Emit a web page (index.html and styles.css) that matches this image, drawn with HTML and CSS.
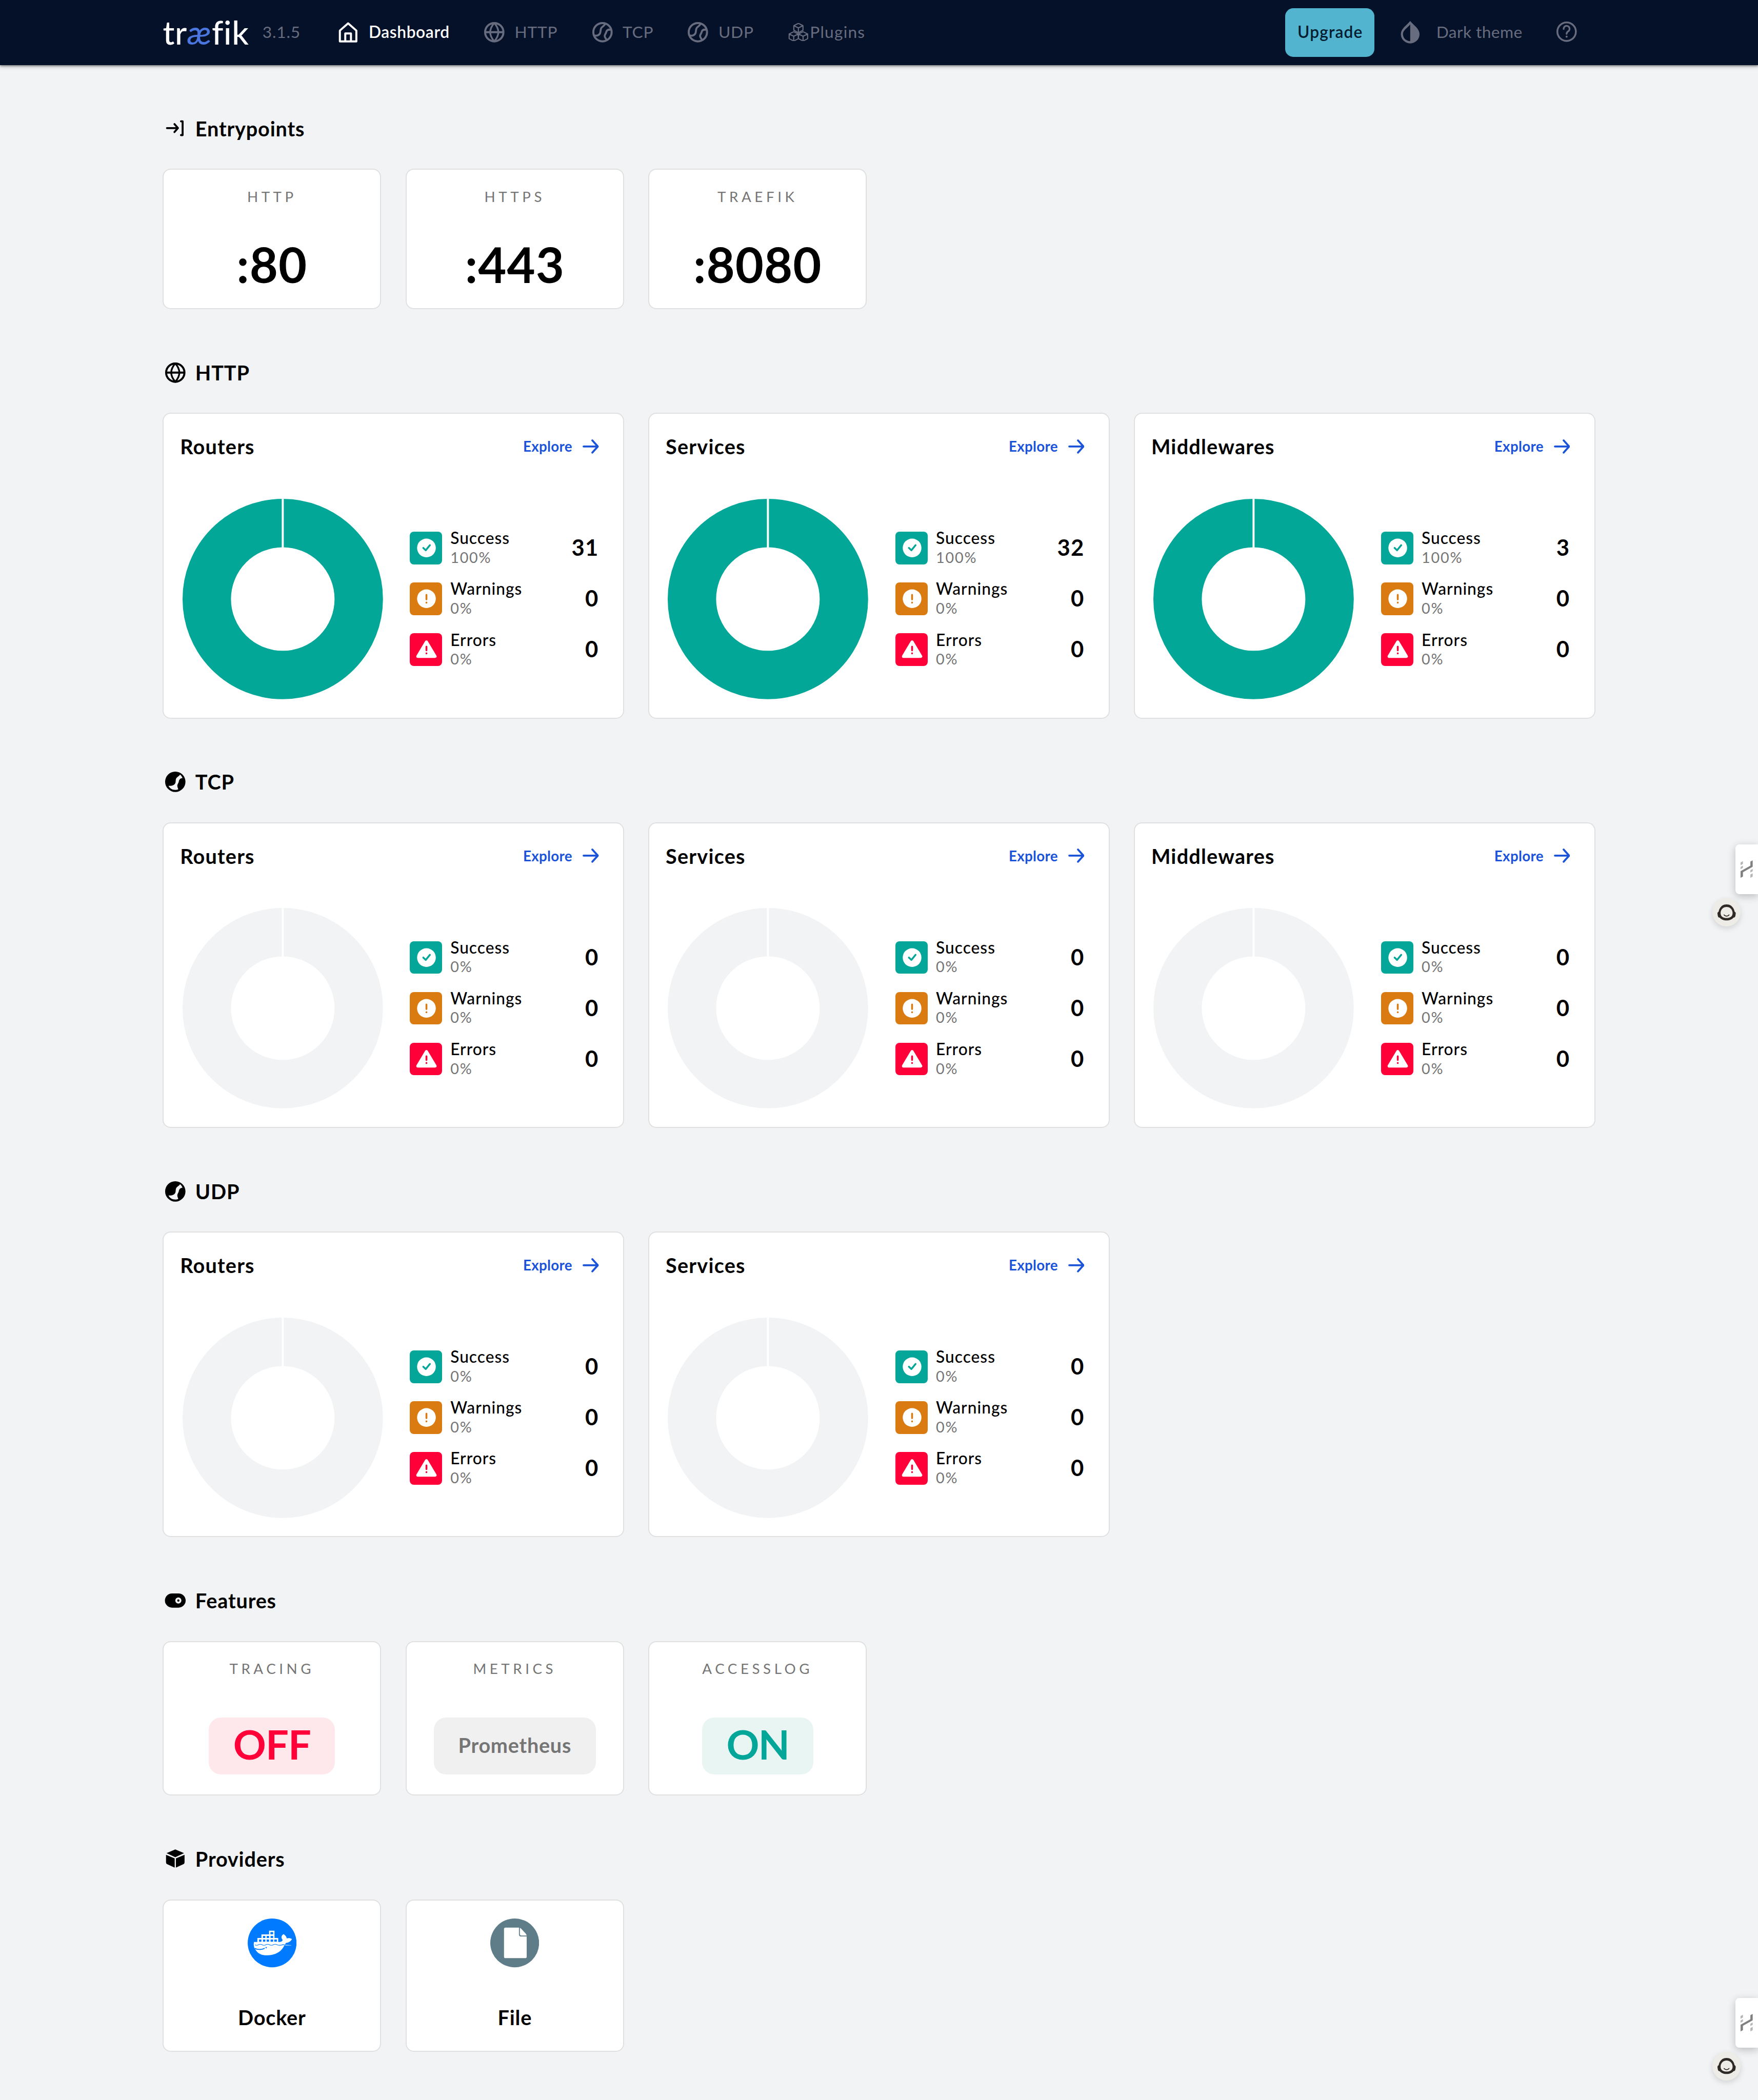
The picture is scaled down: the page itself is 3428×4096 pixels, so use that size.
FILE: index.html
```html
<!DOCTYPE html>
<html lang="en">
<head>
<meta charset="utf-8">
<title>Traefik</title>
<link rel="stylesheet" href="styles.css">
</head>
<body>
<svg class="sprite" aria-hidden="true">
  <symbol id="globe" viewBox="0 0 24 24"><g fill="none" stroke="currentColor" stroke-width="2"><circle cx="12" cy="12" r="9"/><path d="M3 12H21"/><path d="M12 3Q4 12 12 21Q20 12 12 3Z" stroke-linejoin="round" stroke-width="1.7"/></g></symbol>
  <symbol id="world" viewBox="0 0 24 24"><g fill="none" stroke="currentColor" stroke-width="1.9"><circle cx="12" cy="12" r="9" stroke-width="2"/><path d="M3.8 15.2C7 15.9 9.4 14.6 9.9 12.2C10.4 9.8 9.8 8.4 11.6 7C13.2 5.8 14.2 5.2 14.6 3.6"/><path d="M20.6 9.6C18.2 9.2 16.2 9.8 15.8 11.6C15.4 13.4 14.2 14 14.2 15.8C14.3 17.8 15.6 18 16.2 20"/></g></symbol>
  <symbol id="world-solid" viewBox="0 0 24 24"><path fill="currentColor" fill-rule="evenodd" d="M12 2A10 10 0 1 1 12 22A10 10 0 1 1 12 2ZM16.6 4.9C16 6 15.5 6.3 14 7.4C12 9 12.7 10.6 12.2 12.8C11.5 15.2 9 16.2 5.3 16C6.7 18.8 9.2 20 12 20C13 20 14 19.8 14.8 19.5C15 18.6 14 17.7 14 16C14 14.2 15.2 13.6 15.5 11.6C15.8 9.6 17 8.7 19.1 8.3C18.6 6.9 17.7 5.7 16.6 4.9Z"/></symbol>
  <symbol id="cube" viewBox="-5 -5 10 10" overflow="visible"><path fill="none" stroke="currentColor" stroke-width="1.1" stroke-linejoin="round" d="M0-4.5L4.5-2.3V2.3L0 4.7L-4.5 2.3V-2.3ZM-4.5-2.3L0 0L4.5-2.3M0 0V4.7"/></symbol>
  <symbol id="arrow" viewBox="0 0 16 16"><path fill="none" stroke="currentColor" stroke-width="1.9" stroke-linecap="round" stroke-linejoin="round" d="M1 8H15M9.6 2L15 8L9.6 14"/></symbol>
  <symbol id="ok" viewBox="0 0 32 32"><circle cx="16.4" cy="16" r="9.2" fill="#fff"/><path fill="none" stroke="#03a698" stroke-width="1.8" stroke-linecap="round" stroke-linejoin="round" d="M13.3 16L15.7 18.3L19.8 13.3"/></symbol>
  <symbol id="warn" viewBox="0 0 32 32"><circle cx="16.4" cy="16" r="9.2" fill="#fff"/><path fill="none" stroke="#d97b11" stroke-width="1.8" stroke-linecap="round" d="M16.4 12.3V16.7M16.4 19.8V19.9"/></symbol>
  <symbol id="err" viewBox="0 0 32 32"><path fill="#fff" stroke="#fff" stroke-width="3" stroke-linejoin="round" d="M16.4 8.6L24.9 22.8H7.9Z"/><path fill="none" stroke="#ff0039" stroke-width="1.8" stroke-linecap="round" d="M16.4 13.2V16.9M16.4 19.8V19.9"/></symbol>
  <symbol id="donut" viewBox="0 0 200 200"><circle cx="100" cy="100" r="74.7" fill="none" stroke="currentColor" stroke-width="47.6"/><path d="M100 0V52" stroke="#fff" stroke-width="2"/></symbol>
  <symbol id="tab-mark" viewBox="0 0 24 35"><path fill="#808080" d="M0 34.5V21.5L19.3 10.5V2.5L24 0V12.5L4.7 23.5V32Z"/><path fill="#b5b5b5" d="M0 4.3L4.7 1.8V7L0 9.5ZM0 13L4.7 10.5V15L0 17.5ZM19.3 19.5L24 17V21.5L19.3 24ZM19.3 28L24 25.5V32L19.3 34.5Z"/></symbol>
  <symbol id="face" viewBox="0 0 28 28"><path fill="#2f2a26" fill-rule="evenodd" d="M14 6C17.5 6 19 7.6 20.4 9.5C21.4 11 21.6 12.3 21.9 13.2C23 13.6 23.2 14.8 22.8 16.2C22.7 18 22.2 19 20.8 19C19.5 20.8 17 21.8 14 21.8C11 21.8 8.5 20.8 7.2 19C5.8 19 5.4 18 5.2 16.2C4.8 14.8 5 13.6 6.2 13.2C6.4 12.3 6.6 11 7.6 9.5C9 7.6 10.5 6 14 6ZM14 8.6C10.5 8.6 8.1 11.3 8.1 14.6C8.1 18 10.6 19.4 14 19.4C17.4 19.4 19.9 18 19.9 14.6C19.9 11.3 17.5 8.6 14 8.6Z"/><path fill="none" stroke="#2f2a26" stroke-width=".9" stroke-linecap="round" d="M11.5 16.4C12.8 18 15.2 18 16.4 16.4"/></symbol>
</svg>

<header class="topbar">
  <div class="container topbar-row">
    <div class="logo">tr<span class="logo-ae">æ</span>fik</div>
    <span class="version">3.1.5</span>
    <nav class="nav">
      <a class="nav-item nav-home active"><svg class="i24" viewBox="0 0 24 24"><path fill="none" stroke="currentColor" stroke-width="2" stroke-linejoin="round" d="M3.9 21V10.4L12 3.3L20.1 10.4V21ZM9.2 21V13.2H14.8V21"/></svg>Dashboard</a>
      <a class="nav-item nav-http"><svg class="i24"><use href="#globe"/></svg>HTTP</a>
      <a class="nav-item nav-tcp"><svg class="i24"><use href="#world"/></svg>TCP</a>
      <a class="nav-item nav-udp"><svg class="i24"><use href="#world"/></svg>UDP</a>
      <a class="nav-item nav-plugins"><svg class="i-plug" viewBox="0 0 20 18"><use href="#cube" x="5" y="-.2" width="10" height="10"/><use href="#cube" x=".4" y="8" width="10" height="10"/><use href="#cube" x="9.6" y="8" width="10" height="10"/></svg>Plugins</a>
    </nav>
    <a class="upgrade">Upgrade</a>
    <a class="theme"><svg class="i24" viewBox="0 0 24 24"><path fill="currentColor" fill-rule="evenodd" d="M12 1C8.6 5.2 2.8 8.4 2.8 13.9A9.2 9.1 0 0 0 21.2 13.9C21.2 8.4 15.4 5.2 12 1ZM12 4.4V20.8C8 20.8 4.9 17.7 4.9 13.9C4.9 10 9.2 7.8 12 4.4Z"/></svg>Dark theme</a>
    <svg class="i24 help" viewBox="0 0 24 24"><circle cx="12" cy="12" r="9.1" fill="none" stroke="currentColor" stroke-width="1.8"/><path fill="none" stroke="currentColor" stroke-width="1.7" stroke-linecap="round" d="M9.1 9.3A2.9 2.9 0 1 1 13.7 11.5C12.6 12.3 12 12.7 12 14.1"/><circle cx="12" cy="16.9" r="1" fill="currentColor"/></svg>
  </div>
</header>

<main class="container">
  <section>
    <h2><svg class="i24" viewBox="0 0 24 24"><path fill="none" stroke="currentColor" stroke-width="1.9" stroke-linecap="round" stroke-linejoin="round" d="M3.8 11.5H14.4M11.2 7.6L14.6 11.5L11.2 15.4M17.6 4.8H19.2V18.4H17.6"/></svg>Entrypoints</h2>
    <div class="grid small">
      <div class="card entry"><span class="label">HTTP</span><b class="port">:80</b></div>
      <div class="card entry"><span class="label">HTTPS</span><b class="port">:443</b></div>
      <div class="card entry"><span class="label">TRAEFIK</span><b class="port">:8080</b></div>
    </div>
  </section>

  <section>
    <h2><svg class="i24"><use href="#globe"/></svg>HTTP</h2>
    <div class="grid wide">
      <article class="card stat">
        <div class="stat-head"><h3>Routers</h3><a class="explore">Explore<svg><use href="#arrow"/></svg></a></div>
        <div class="stat-body"><svg class="donut full"><use href="#donut"/></svg>
          <ul class="legend">
            <li><svg class="tag ok"><use href="#ok"/></svg><span class="name">Success<small>100%</small></span><b>31</b></li>
            <li><svg class="tag warn"><use href="#warn"/></svg><span class="name">Warnings<small>0%</small></span><b>0</b></li>
            <li><svg class="tag err"><use href="#err"/></svg><span class="name">Errors<small>0%</small></span><b>0</b></li>
          </ul></div>
      </article>
      <article class="card stat">
        <div class="stat-head"><h3>Services</h3><a class="explore">Explore<svg><use href="#arrow"/></svg></a></div>
        <div class="stat-body"><svg class="donut full"><use href="#donut"/></svg>
          <ul class="legend">
            <li><svg class="tag ok"><use href="#ok"/></svg><span class="name">Success<small>100%</small></span><b>32</b></li>
            <li><svg class="tag warn"><use href="#warn"/></svg><span class="name">Warnings<small>0%</small></span><b>0</b></li>
            <li><svg class="tag err"><use href="#err"/></svg><span class="name">Errors<small>0%</small></span><b>0</b></li>
          </ul></div>
      </article>
      <article class="card stat">
        <div class="stat-head"><h3>Middlewares</h3><a class="explore">Explore<svg><use href="#arrow"/></svg></a></div>
        <div class="stat-body"><svg class="donut full"><use href="#donut"/></svg>
          <ul class="legend">
            <li><svg class="tag ok"><use href="#ok"/></svg><span class="name">Success<small>100%</small></span><b>3</b></li>
            <li><svg class="tag warn"><use href="#warn"/></svg><span class="name">Warnings<small>0%</small></span><b>0</b></li>
            <li><svg class="tag err"><use href="#err"/></svg><span class="name">Errors<small>0%</small></span><b>0</b></li>
          </ul></div>
      </article>
    </div>
  </section>

  <section>
    <h2><svg class="i24"><use href="#world-solid"/></svg>TCP</h2>
    <div class="grid wide">
      <article class="card stat">
        <div class="stat-head"><h3>Routers</h3><a class="explore">Explore<svg><use href="#arrow"/></svg></a></div>
        <div class="stat-body"><svg class="donut"><use href="#donut"/></svg>
          <ul class="legend">
            <li><svg class="tag ok"><use href="#ok"/></svg><span class="name">Success<small>0%</small></span><b>0</b></li>
            <li><svg class="tag warn"><use href="#warn"/></svg><span class="name">Warnings<small>0%</small></span><b>0</b></li>
            <li><svg class="tag err"><use href="#err"/></svg><span class="name">Errors<small>0%</small></span><b>0</b></li>
          </ul></div>
      </article>
      <article class="card stat">
        <div class="stat-head"><h3>Services</h3><a class="explore">Explore<svg><use href="#arrow"/></svg></a></div>
        <div class="stat-body"><svg class="donut"><use href="#donut"/></svg>
          <ul class="legend">
            <li><svg class="tag ok"><use href="#ok"/></svg><span class="name">Success<small>0%</small></span><b>0</b></li>
            <li><svg class="tag warn"><use href="#warn"/></svg><span class="name">Warnings<small>0%</small></span><b>0</b></li>
            <li><svg class="tag err"><use href="#err"/></svg><span class="name">Errors<small>0%</small></span><b>0</b></li>
          </ul></div>
      </article>
      <article class="card stat">
        <div class="stat-head"><h3>Middlewares</h3><a class="explore">Explore<svg><use href="#arrow"/></svg></a></div>
        <div class="stat-body"><svg class="donut"><use href="#donut"/></svg>
          <ul class="legend">
            <li><svg class="tag ok"><use href="#ok"/></svg><span class="name">Success<small>0%</small></span><b>0</b></li>
            <li><svg class="tag warn"><use href="#warn"/></svg><span class="name">Warnings<small>0%</small></span><b>0</b></li>
            <li><svg class="tag err"><use href="#err"/></svg><span class="name">Errors<small>0%</small></span><b>0</b></li>
          </ul></div>
      </article>
    </div>
  </section>

  <section>
    <h2><svg class="i24"><use href="#world-solid"/></svg>UDP</h2>
    <div class="grid wide">
      <article class="card stat">
        <div class="stat-head"><h3>Routers</h3><a class="explore">Explore<svg><use href="#arrow"/></svg></a></div>
        <div class="stat-body"><svg class="donut"><use href="#donut"/></svg>
          <ul class="legend">
            <li><svg class="tag ok"><use href="#ok"/></svg><span class="name">Success<small>0%</small></span><b>0</b></li>
            <li><svg class="tag warn"><use href="#warn"/></svg><span class="name">Warnings<small>0%</small></span><b>0</b></li>
            <li><svg class="tag err"><use href="#err"/></svg><span class="name">Errors<small>0%</small></span><b>0</b></li>
          </ul></div>
      </article>
      <article class="card stat">
        <div class="stat-head"><h3>Services</h3><a class="explore">Explore<svg><use href="#arrow"/></svg></a></div>
        <div class="stat-body"><svg class="donut"><use href="#donut"/></svg>
          <ul class="legend">
            <li><svg class="tag ok"><use href="#ok"/></svg><span class="name">Success<small>0%</small></span><b>0</b></li>
            <li><svg class="tag warn"><use href="#warn"/></svg><span class="name">Warnings<small>0%</small></span><b>0</b></li>
            <li><svg class="tag err"><use href="#err"/></svg><span class="name">Errors<small>0%</small></span><b>0</b></li>
          </ul></div>
      </article>
    </div>
  </section>

  <section>
    <h2><svg class="i24" viewBox="0 0 24 24"><path fill="currentColor" fill-rule="evenodd" d="M8.8 5H15.2A7 7 0 0 1 15.2 19H8.8A7 7 0 0 1 8.8 5ZM15 9A3 3 0 0 0 15 15A3 3 0 0 0 15 9Z"/><circle cx="15" cy="12" r="1.1" fill="currentColor"/></svg>Features</h2>
    <div class="grid small">
      <div class="card feature"><span class="label">TRACING</span><b class="badge off">OFF</b></div>
      <div class="card feature"><span class="label">METRICS</span><b class="badge vendor">Prometheus</b></div>
      <div class="card feature"><span class="label">ACCESSLOG</span><b class="badge on">ON</b></div>
    </div>
  </section>

  <section>
    <h2><svg class="i24" viewBox="0 0 24 24"><path fill="currentColor" d="M12 2.6L20.6 6.3L12 10.3L3.4 6.3ZM2.9 8L11.4 11.5V20.6L4 17.2Q2.9 16.6 2.9 15.4ZM21.1 8L12.6 11.5V20.6L20 17.2Q21.1 16.6 21.1 15.4Z"/></svg>Providers</h2>
    <div class="grid small">
      <div class="card provider">
        <svg class="logo48" viewBox="51 39 288 288"><circle cx="195" cy="183" r="144" fill="#007bff"/>
          <path fill="#fff" d="M177 111H209V154H231V177H242C254 174 258 170 256 164C247 152 248 140 263 131C274 138 281 148 281 156C291 153 303 154 312 160C306 172 296 181 277 183C274 187 273 190 271 194L308 196V198H267C252 232 218 256 165 256C132 256 112 246 101 229C88 215 84 196 88 177H108V154H132V133H177Z"/>
          <path fill="#007bff" d="M185 119h16v13h-16zM141 142h14v12h-14zM163 142h14v12h-14zM186 142h15v12h-15zM118 163h14v13h-14zM141 163h14v13h-14zM163 163h14v13h-14zM186 163h15v13h-15zM208 163h15v13h-15z"/>
          <path fill="none" stroke="#007bff" stroke-width="3.5" d="M94 194Q104 200 114 194Q125 188 136 194Q147 200 158 194Q169 188 180 194Q191 200 202 194Q213 188 224 194Q240 200 260 193L274 196"/>
          <path fill="none" stroke="#007bff" stroke-width="6" d="M92 216C112 224 136 222 151 215"/><circle cx="160" cy="211" r="4" fill="#007bff"/></svg>
        <b>Docker</b></div>
      <div class="card provider">
        <svg class="logo48" viewBox="0 0 48 48"><circle cx="24" cy="24" r="24" fill="#5e7d88"/><path fill="#fff" d="M15 9H28.2V15.6Q28.2 17.7 30.3 17.7H35.8V37.5Q35.8 39 34.3 39H15Q13.5 39 13.5 37.5V10.5Q13.5 9 15 9ZM29.1 9.2Q29.9 9.5 30.3 10L35 15Q35.6 15.8 35.8 16.7H30.6Q29.1 16.7 29.1 15.2Z"/></svg>
        <b>File</b></div>
    </div>
  </section>
</main>

<div class="side-tab first"><svg><use href="#tab-mark"/></svg></div>
<div class="bubble first"><svg><use href="#face"/></svg></div>
<div class="side-tab second"><svg><use href="#tab-mark"/></svg></div>
<div class="bubble second"><svg><use href="#face"/></svg></div>
</body>
</html>
```
FILE: styles.css
```css
* { box-sizing: border-box; margin: 0; padding: 0; }

html { background: #f1f3f5; overflow: hidden; }

body {
  position: relative;
  zoom: 1.98379;
  width: 1728px;
  height: 2064.7px;
  overflow: hidden;
  background: #f1f3f5;
  color: #000;
  font: 400 16px/24px Lato, "Open Sans", sans-serif;
}

svg { display: block; flex: none; }
.sprite { position: absolute; width: 0; height: 0; }
.i24 { width: 24px; height: 24px; }

.container { width: 1408px; margin: 0 auto; }

/* Top bar */
.topbar {
  position: relative;
  height: 64px;
  background: #041129;
  color: #686c7f;
  box-shadow: 0 1px 2px rgba(0, 0, 0, .4), 0 1px 5px rgba(0, 0, 0, .2);
}
.topbar-row { display: flex; align-items: center; height: 63px; }
.logo {
  width: 98px;
  color: #fff;
  font-size: 32px;
  font-weight: 500;
  line-height: 40px;
  letter-spacing: .35px;
  font-variant-ligatures: none;
  white-space: nowrap;
}
.logo-ae { color: #4b76e0; font-style: italic; }
.version { width: 72.4px; letter-spacing: .4px; }
.nav { display: flex; width: 932.6px; }
.nav-item { display: flex; align-items: center; gap: 8px; letter-spacing: .4px; white-space: nowrap; }
.nav-item.active { color: #fff; font-weight: 600; letter-spacing: .3px; }
.nav-home { width: 143.4px; }
.nav-http { width: 106.2px; }
.nav-tcp { width: 94.2px; }
.nav-udp { width: 100.4px; }
.nav-plugins { gap: 1.5px; letter-spacing: .6px; }
.i-plug { width: 20px; height: 18px; }
.upgrade {
  width: 88px;
  height: 48px;
  margin-top: 1px;
  padding-left: 1px;
  border-radius: 8px;
  background: #52b4cf;
  color: #041c30;
  font-weight: 600;
  line-height: 47px;
  letter-spacing: .55px;
  text-align: center;
}
.theme { display: flex; gap: 13.6px; margin-left: 23.2px; width: 153.8px; letter-spacing: .2px; white-space: nowrap; }
.help { margin-top: -1px; }

/* Sections */
h2 {
  display: flex;
  align-items: center;
  gap: 7.6px;
  height: 102px;
  padding: 22.6px 0 0 .4px;
  font-size: 20px;
  font-weight: 700;
  line-height: 28px;
  letter-spacing: .4px;
}
.grid { display: grid; gap: 24px; }
.grid.small { grid-template-columns: repeat(6, 1fr); }
.grid.wide { grid-template-columns: repeat(3, 1fr); }
.card { border: 1.01px solid #e0e0e0; border-radius: 8px; background: #fff; }

.entry, .feature, .provider { display: flex; flex-direction: column; align-items: center; }
.entry { height: 138px; padding-top: 16.5px; }
.label { color: #757575; font-size: 14px; line-height: 20px; letter-spacing: 3.3px; }
.port { margin-top: 27.5px; font-size: 48px; line-height: 58px; letter-spacing: .5px; }

.feature { height: 152px; padding-top: 16px; }
.badge {
  height: 56px;
  margin-top: 38px;
  padding: 0 24px;
  border-radius: 12px;
  font-size: 40px;
  line-height: 52px;
  letter-spacing: -.5px;
}
.off { background: #ffe8eb; color: #ff0039; }
.on { background: #e9f5f3; color: #03a698; letter-spacing: -1px; }
.vendor { background: #f0f0f0; color: #757575; font-size: 20px; line-height: 54px; letter-spacing: .35px; }

.provider { height: 150px; padding-top: 18px; font-size: 20px; letter-spacing: .4px; }
.logo48 { width: 48px; height: 48px; margin-bottom: 37px; }

/* Status cards */
.stat { height: 300.5px; padding: 15px 23.8px 0 16px; }
.stat-head { display: flex; align-items: center; justify-content: space-between; height: 34px; }
h3 { font-size: 20px; font-weight: 700; line-height: 24px; letter-spacing: .6px; }
.explore { display: flex; align-items: center; gap: 10px; color: #1b54d9; font-size: 14px; font-weight: 700; letter-spacing: .15px; }
.explore svg { width: 16px; height: 16px; }
.stat-body { display: flex; align-items: center; margin-top: 32.8px; }
.donut { width: 200px; height: 200px; margin-left: .7px; color: #f1f3f5; }
.donut.full { color: #02a798; }
.legend { flex: 1; margin-left: 25px; list-style: none; }
.legend li { display: flex; align-items: center; height: 50px; }
.tag { width: 32px; height: 32px; border-radius: 4px; }
.tag.ok { background: #03a698; }
.tag.warn { background: #d97b11; }
.tag.err { background: #ff0039; }
.name { flex: 1; margin-left: 8px; font-weight: 500; line-height: 19px; letter-spacing: .5px; }
.name small { display: block; color: #757575; font-size: 14.5px; font-weight: 400; letter-spacing: .9px; }
.legend b { padding-bottom: 1px; font-size: 22px; letter-spacing: .6px; }

/* Floating widgets on the right edge */
.side-tab {
  position: absolute;
  right: 0;
  display: flex;
  align-items: center;
  width: 22px;
  height: 49px;
  padding-left: 5px;
  border-radius: 4px 0 0 4px;
  background: #fff;
  box-shadow: 0 2px 8px rgba(0, 0, 0, .24);
}
.side-tab svg { width: 12px; height: 17.5px; }
.side-tab.first { top: 830px; }
.side-tab.second { top: 1964.5px; }
.bubble {
  position: absolute;
  left: 1683px;
  width: 28px;
  height: 28px;
  border-radius: 50%;
  background: #edece7;
  box-shadow: 0 2px 6px rgba(0, 0, 0, .14);
}
.bubble svg { width: 28px; height: 28px; }
.bubble.first { top: 883px; }
.bubble.second { top: 2017.5px; }
```
